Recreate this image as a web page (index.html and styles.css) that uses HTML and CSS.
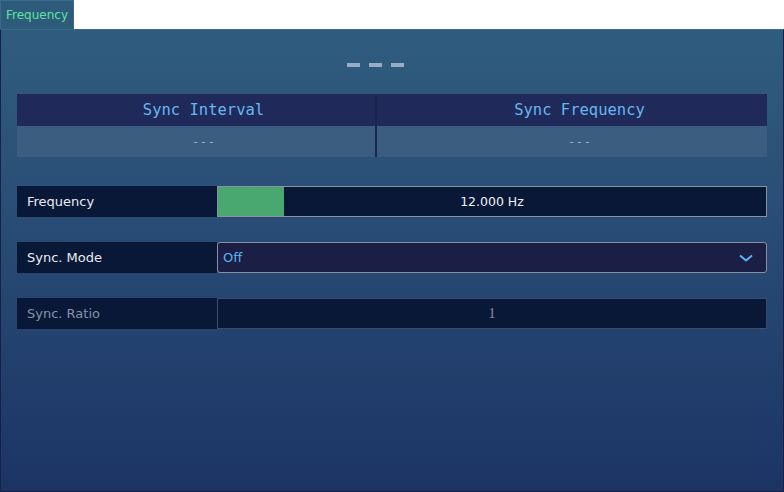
FILE: index.html
```html
<!DOCTYPE html>
<html>
<head>
<meta charset="utf-8">
<link rel="stylesheet" href="styles.css">
</head>
<body>
<div class="tabs"><div class="tab">Frequency</div></div>
<div class="panel">
  <div class="status"><span class="bar"></span><span class="bar"></span><span class="bar"></span></div>
  <div class="sync-table">
    <div class="th c1">Sync Interval</div>
    <div class="th c2">Sync Frequency</div>
    <div class="td c1">---</div>
    <div class="td c2">---</div>
  </div>
  <div class="row first">
    <div class="label">Frequency</div>
    <div class="slider"><div class="fill" style="width:66px"></div><span class="value">12.000 Hz</span></div>
  </div>
  <div class="row">
    <div class="label">Sync. Mode</div>
    <div class="select"><span>Off</span>
      <svg class="chev" width="14" height="8" viewBox="0 0 14 8"><path d="M1 1.5 L7 6.5 L13 1.5" fill="none" stroke="#5db4f0" stroke-width="2"/></svg>
    </div>
  </div>
  <div class="row disabled">
    <div class="label">Sync. Ratio</div>
    <div class="field">1</div>
  </div>
</div>
</body>
</html>
```
FILE: styles.css
```css
html, body { margin: 0; padding: 0; }
body {
  width: 784px;
  height: 492px;
  background: #ffffff;
  font-family: "DejaVu Sans", Verdana, sans-serif;
  overflow: hidden;
}
.tabs { height: 29px; display: flex; }
.tab {
  width: 72px;
  height: 28px;
  background: #2f5b7b;
  border: 1px solid #3a6a8c;
  border-bottom: none;
  color: #5ee3a0;
  font-size: 12px;
  line-height: 28px;
  text-align: center;
}
.panel {
  height: 463px;
  box-sizing: border-box;
  border: 1px solid #16224a;
  border-top: 1px solid #3a6a8c;
  background: linear-gradient(#2f5d7e 0%, #2a4f78 35%, #1c3464 100%);
  padding: 0 16px;
}
.status {
  height: 64px;
  display: flex;
  gap: 9px;
  padding-top: 33px;
  padding-left: 330px;
  box-sizing: border-box;
}
.bar { width: 13px; height: 4px; background: #98adc5; }
.sync-table {
  display: grid;
  grid-template-columns: 358px 2px 1fr;
  grid-template-rows: 32px 31px;
  font-family: "DejaVu Sans Mono", monospace;
}
.c1 { grid-column: 1; }
.c2 { grid-column: 3; }
.th {
  background: #1f2a5a;
  color: #67b7ef;
  font-size: 15.5px;
  padding-left: 15px;
  display: flex; align-items: center; justify-content: center;
}
.td {
  background: #3a5d80;
  color: #9aa9bc;
  font-size: 13px;
  padding-left: 15px;
  display: flex; align-items: center; justify-content: center;
}
.sync-table::before {
  content: "";
  grid-column: 2;
  grid-row: 1 / 3;
  background: #1a2550;
}
.row {
  display: flex;
  height: 31px;
  margin-top: 25px;
}
.row.first { margin-top: 29px; }
.label {
  width: 200px;
  background: #0a1838;
  color: #e8ecf2;
  font-size: 13px;
  padding-left: 10px;
  box-sizing: border-box;
  display: flex; align-items: center;
}
.slider {
  flex: 1;
  position: relative;
  background: #0a1838;
  border: 1px solid #8a939c;
  display: flex; align-items: center; justify-content: center;
}
.fill {
  position: absolute; left: 0; top: 0; bottom: 0;
  background: #48a870;
}
.value { color: #eef1f5; font-size: 12.5px; position: relative; }
.select {
  flex: 1;
  background: #1b1f45;
  border: 1px solid #8a909e;
  border-radius: 3px;
  color: #5db4f0;
  font-size: 13px;
  display: flex; align-items: center; justify-content: space-between;
  padding: 0 13px 0 5px;
}
.disabled .label { color: #8592a6; }
.field {
  flex: 1;
  background: #0a1838;
  border: 1px solid #3c4c6c;
  color: #8592a6;
  font-family: "Liberation Serif", serif;
  font-size: 14px;
  display: flex; align-items: center; justify-content: center;
}
```
